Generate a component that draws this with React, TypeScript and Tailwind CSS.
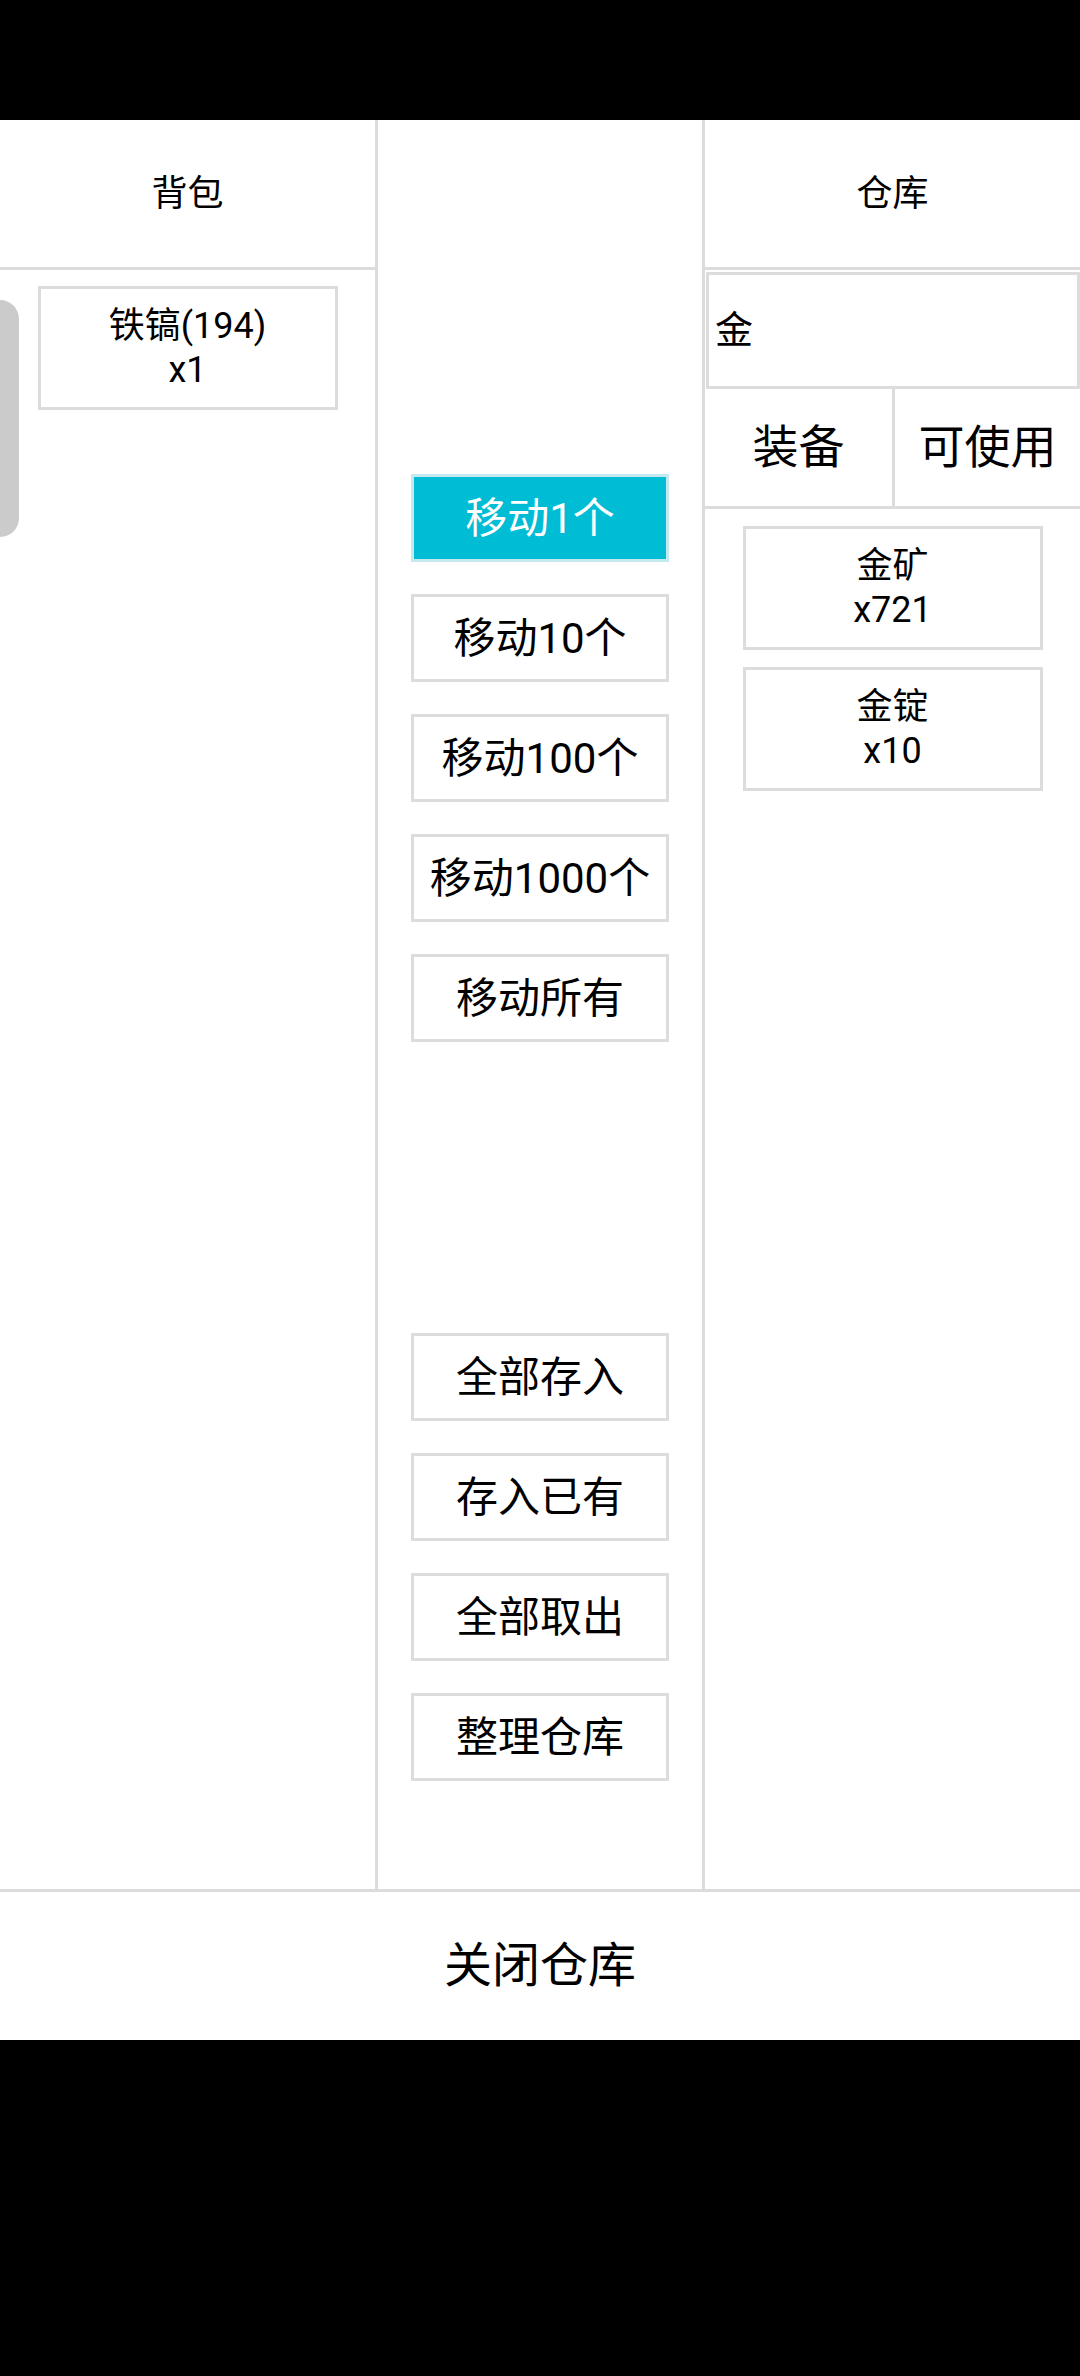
const moveButtons = ["移动1个", "移动10个", "移动100个", "移动1000个", "移动所有"];
const bulkButtons = ["全部存入", "存入已有", "全部取出", "整理仓库"];

const bagItems = [{ name: "铁镐(194)", count: 1 }];
const storeItems = [
  { name: "金矿", count: 721 },
  { name: "金锭", count: 10 },
];

const ItemCard = ({ name, count }: { name: string; count: number }) => (
  <div className="mx-auto flex h-[124px] w-[300px] flex-col items-center justify-center border-[3px] border-[#dcdcdc] text-[36px] leading-[44px]">
    <span>{name}</span>
    <span>x{count}</span>
  </div>
);

const ActionButton = ({ label, active }: { label: string; active?: boolean }) => (
  <div
    className={
      active
        ? "mx-auto flex h-[88px] w-[258px] items-center justify-center border-[3px] border-[#c4e9ef] bg-[#00bcd4] text-[42px] text-white"
        : "mx-auto flex h-[88px] w-[258px] items-center justify-center border-[3px] border-[#dcdcdc] bg-white text-[42px] text-black"
    }
  >
    {label}
  </div>
);

export default function App() {
  const selected = 0;

  return (
    <div className="flex h-[2376px] w-[1080px] flex-col bg-black font-[Roboto,'Noto_Sans_CJK_SC',sans-serif] text-black">
      {/* status bar area */}
      <div className="h-[120px] shrink-0" />

      <div className="flex shrink-0 flex-col bg-white">
        <div className="flex h-[1772px] border-b-[3px] border-[#dcdcdc]">
          {/* 背包 */}
          <div className="relative w-[378px] border-r-[3px] border-[#dcdcdc]">
            <div className="flex h-[150px] items-center justify-center border-b-[3px] border-[#dcdcdc] text-[36px]">
              背包
            </div>
            <div className="flex flex-col gap-[17px] pt-[16px]">
              {bagItems.map((it) => (
                <ItemCard key={it.name} {...it} />
              ))}
            </div>
            {/* scrollbar thumb */}
            <div className="absolute left-0 top-[180px] h-[237px] w-[19px] rounded-r-[20px] bg-[#cbcbcb]" />
          </div>

          {/* actions */}
          <div className="flex w-[327px] flex-col border-r-[3px] border-[#dcdcdc] pt-[354px]">
            <div className="flex flex-col gap-[32px]">
              {moveButtons.map((label, i) => (
                <ActionButton key={label} label={label} active={i === selected} />
              ))}
            </div>
            <div className="mt-[291px] flex flex-col gap-[32px]">
              {bulkButtons.map((label) => (
                <ActionButton key={label} label={label} />
              ))}
            </div>
          </div>

          {/* 仓库 */}
          <div className="flex flex-1 flex-col">
            <div className="flex h-[150px] items-center justify-center border-b-[3px] border-[#dcdcdc] text-[36px]">
              仓库
            </div>
            <div className="ml-[1px] mt-[2px] flex h-[117px] items-center border-[3px] border-[#dcdcdc] pl-[6px] text-[38px]">
              金
            </div>
            <div className="flex h-[120px] border-b-[3px] border-[#dcdcdc] text-[46px]">
              <div className="flex w-[190px] items-center justify-center border-r-[3px] border-[#dcdcdc]">
                装备
              </div>
              <div className="flex flex-1 items-center justify-center">可使用</div>
            </div>
            <div className="flex flex-col gap-[17px] pt-[17px]">
              {storeItems.map((it) => (
                <ItemCard key={it.name} {...it} />
              ))}
            </div>
          </div>
        </div>

        <div className="flex h-[148px] items-center justify-center text-[48px]">关闭仓库</div>
      </div>
    </div>
  );
}
